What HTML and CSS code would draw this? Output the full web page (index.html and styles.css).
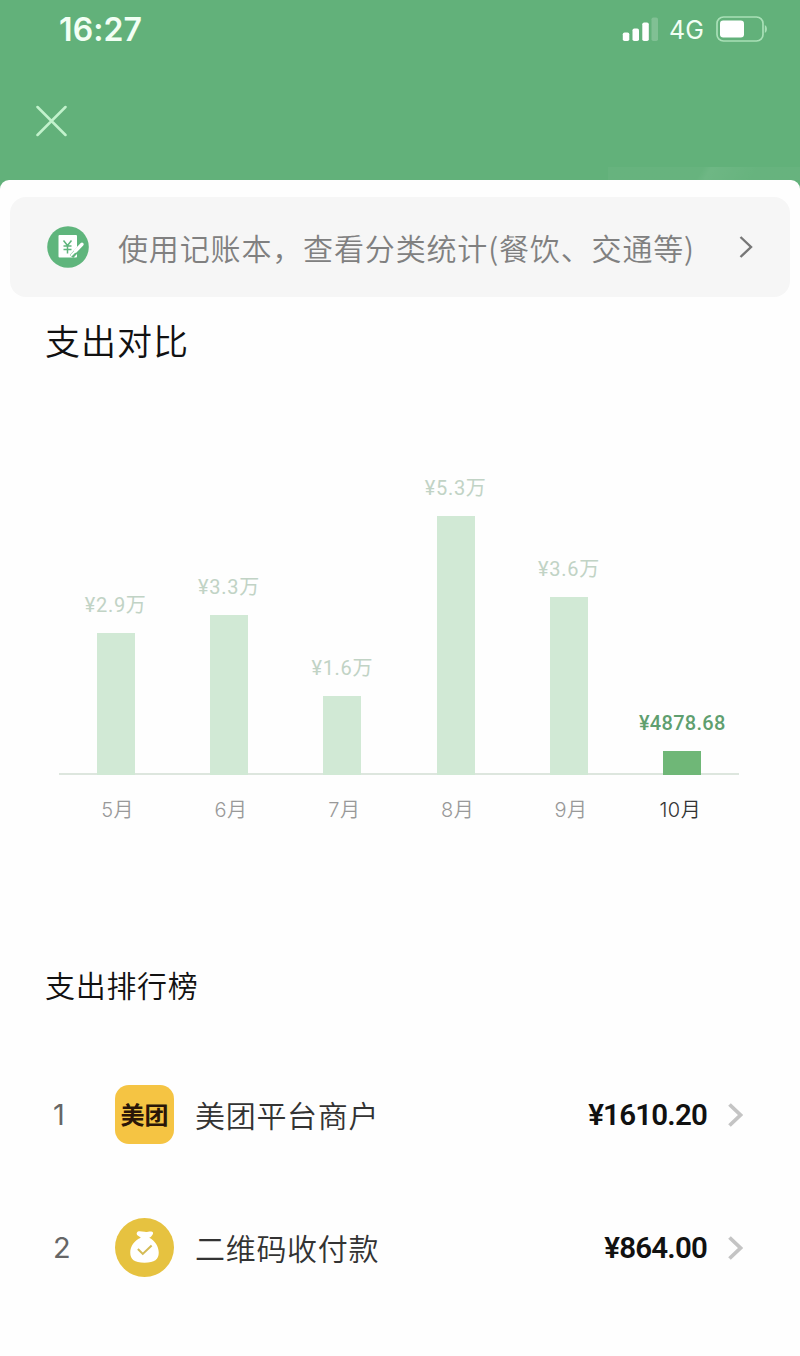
FILE: index.html
```html
<!DOCTYPE html>
<html lang="zh-CN">
<head>
  <meta charset="UTF-8">
  <title>支出对比</title>
  <link rel="stylesheet" href="styles.css">
</head>
<body>
  <header class="header">
    <div class="status-bar">
      <span class="time">16:27</span>
      <div class="status-icons">
        <svg class="signal" width="36" height="24" viewBox="0 0 36 24" fill="#fff">
          <rect x="0.8" y="15.5" width="6.5" height="8.5" rx="1.8"/>
          <rect x="10.5" y="11.5" width="6.5" height="12.5" rx="1.8"/>
          <rect x="20.3" y="5.5" width="6.5" height="18.5" rx="1.8"/>
          <rect x="29.5" y="0.5" width="6.5" height="23.5" rx="1.8" opacity=".2"/>
        </svg>
        <span class="network">4G</span>
        <svg class="battery" width="53" height="26" viewBox="0 0 53 26">
          <rect x="2" y="1" width="46" height="24" rx="6.5" fill="none" stroke="#a9e0b7" stroke-width="1.7"/>
          <rect x="5" y="4.5" width="24" height="17" rx="3.2" fill="#fff"/>
          <path d="M49.8 9c2.8 1.2 2.8 6.800 0 8z" fill="#a9e0b7"/>
        </svg>
      </div>
    </div>
    <svg class="close" width="32" height="32" viewBox="0 0 32 32" fill="none" stroke="#c2f2cc" stroke-width="2.5" stroke-linecap="round">
      <path d="M2.5 2l28 28M30.5 2L2.5 30"/>
    </svg>
    <div class="header-shade"></div>
  </header>

  <main class="sheet">
    <a class="banner">
      <svg class="book-icon" width="42" height="42" viewBox="0 0 42 42">
        <circle cx="21" cy="21" r="20.8" fill="#5fb57c"/>
        <rect x="11.5" y="9" width="18.5" height="22.5" rx="1" fill="#fff"/>
        <path d="M16.5 14.5l4 5 4-5M20.5 19.5v8M16.5 20h8M16.5 23.5h8" fill="none" stroke="#5fb57c" stroke-width="1.5"/>
        <path d="M24.5 30.5L35.5 18.5" stroke="#5fb57c" stroke-width="4.6"/>
        <path d="M28.5 25L35 18.3" stroke="#fff" stroke-width="3.4" stroke-linecap="round"/>
        <path d="M24.5 29L28.500 25" stroke="#fff" stroke-width="2" stroke-linecap="round"/>
      </svg>
      <span class="banner-text">使用记账本，查看分类统计(餐饮、交通等)</span>
      <svg class="banner-arrow" width="14" height="24" viewBox="0 0 14 24" fill="none" stroke="#777" stroke-width="2.4">
        <path d="M1.5 2L12 12 1.5 22"/>
      </svg>
    </a>

    <h1 class="compare-title">支出对比</h1>
    <section class="chart">
      <div class="bars">
        <div class="col"><span class="value">¥2.9万</span><div class="bar" style="height: 142px"></div></div>
        <div class="col"><span class="value">¥3.3万</span><div class="bar" style="height: 160px"></div></div>
        <div class="col"><span class="value">¥1.6万</span><div class="bar" style="height: 79px"></div></div>
        <div class="col"><span class="value">¥5.3万</span><div class="bar" style="height: 259px"></div></div>
        <div class="col"><span class="value">¥3.6万</span><div class="bar" style="height: 178px"></div></div>
        <div class="col current"><span class="value">¥4878.68</span><div class="bar" style="height: 24px"></div></div>
      </div>
      <div class="months">
        <span>5月</span>
        <span>6月</span>
        <span>7月</span>
        <span>8月</span>
        <span>9月</span>
        <span class="current">10月</span>
      </div>
    </section>

    <h2 class="rank-title">支出排行榜</h2>
    <ul class="rank-list">
      <li class="rank-item">
        <span class="rank-no">1</span>
        <span class="logo meituan">美团</span>
        <span class="merchant">美团平台商户</span>
        <span class="amount">¥1610.20</span>
        <svg class="arrow" width="15" height="24" viewBox="0 0 15 24" fill="none" stroke="#c4c4c4" stroke-width="3.8">
          <path d="M1.5 1.5L12.5 12 1.5 22.5"/>
        </svg>
      </li>
      <li class="rank-item">
        <span class="rank-no">2</span>
        <svg class="logo" width="58" height="58" viewBox="0 0 58 58">
          <circle cx="29" cy="29" r="29" fill="#e6c240"/>
          <path d="M21.5 14.5C22.5 12 26 13.2 29 13.6C32 14 34 12.6 36.5 13.4C39 14.4 36 18.5 33.5 19.5C39 22 43 28 43 34C43 41 39 44 29 44C19 44 15 41 15 34C15 28 19 22 25.5 19.5C23.5 17.5 20.5 17 21.5 14.5Z" fill="#fff"/>
          <path d="M22.5 30.5l4.8 4.800 8.700-8.300" fill="none" stroke="#d4bb55" stroke-width="2"/>
        </svg>
        <span class="merchant">二维码收付款</span>
        <span class="amount">¥864.00</span>
        <svg class="arrow" width="15" height="24" viewBox="0 0 15 24" fill="none" stroke="#c4c4c4" stroke-width="3.8">
          <path d="M1.5 1.5L12.5 12 1.5 22.5"/>
        </svg>
      </li>
    </ul>
  </main>
</body>
</html>
```
FILE: styles.css
```css
* {
  box-sizing: border-box;
}
body {
  margin: 0;
  height: 1356px;
  overflow: hidden;
  background: #62b17a;
  font-family: Inter, 'Noto Sans CJK SC', sans-serif;
}
.header {
  position: relative;
  height: 180px;
}
.status-bar {
  display: flex;
  justify-content: space-between;
  align-items: center;
  height: 58px;
  padding: 0 32px 0 59px;
  color: #f2fff4;
}
.time {
  font-size: 32px;
  font-weight: 600;
  letter-spacing: 0.1px;
}
.status-icons {
  display: flex;
  align-items: center;
}
.network {
  width: 36px;
  margin: 2px 10px 0 11px;
  font-size: 25px;
  line-height: 28px;
}
.close {
  display: block;
  margin: 47px 0 0 35px;
}
.header-shade {
  position: absolute;
  right: 0;
  bottom: 0;
  width: 192px;
  height: 13px;
  background: linear-gradient(120deg, rgba(255, 255, 255, 0.03) 48%, rgba(255, 255, 255, 0.08) 52%, rgba(255, 255, 255, 0.03) 75%);
}
.sheet {
  height: 1176px;
  padding-top: 17px;
  background: #fefefe;
  border-radius: 9px 9px 0 0;
}

/* bookkeeping entry */
.banner {
  display: flex;
  align-items: center;
  height: 100px;
  margin: 0 10px;
  padding: 0 37px;
  background: #f6f6f6;
  border-radius: 16px;
}
.banner-text {
  flex: 1;
  margin-left: 29px;
  color: #808080;
  font-family: 'Noto Sans CJK SC DemiLight', 'Noto Sans CJK SC', sans-serif;
  font-size: 30px;
  font-weight: 350;
  letter-spacing: 0.85px;
  white-space: nowrap;
}

/* chart */
.compare-title {
  margin: 19px 0 0 45px;
  color: #111;
  font-size: 35px;
  font-weight: 350;
  line-height: 52px;
  letter-spacing: 1px;
}
.chart {
  margin: 87px 61px 0 59px;
}
.bars {
  display: flex;
  height: 320px;
  border-bottom: 2px solid #dde6de;
}
.col {
  flex: 1;
  display: flex;
  flex-direction: column;
  align-items: center;
  justify-content: flex-end;
}
.value {
  margin-bottom: 14px;
  color: #c1d3c5;
  font-family: Roboto, 'Noto Sans CJK SC', sans-serif;
  font-size: 20px;
  line-height: 28px;
  letter-spacing: 0.7px;
  white-space: nowrap;
}
.bar {
  flex: none;
  width: 38px;
  margin-bottom: -2px;
  background: #d1e9d5;
}
.col.current .value {
  color: #5f9f6f;
  font-weight: 500;
  letter-spacing: 0.3px;
}
.col.current .bar {
  background: #6fb777;
}
.months {
  display: flex;
  padding-top: 20px;
}
.months span {
  flex: 1;
  padding-left: 4px;
  color: #999;
  font-size: 20px;
  font-weight: 350;
  line-height: 30px;
  letter-spacing: 0.5px;
  text-align: center;
}
.months .current {
  padding: 0 4px 0 0;
  color: #333;
}

/* ranking */
.rank-title {
  margin: 139px 0 0 45px;
  color: #111;
  font-size: 30px;
  font-weight: 350;
  line-height: 44px;
  letter-spacing: 0.7px;
}
.rank-list {
  margin: 40px 0 0;
  padding: 0 57px 0 53px;
  list-style: none;
}
.rank-item {
  display: flex;
  align-items: center;
  height: 133px;
}
.rank-no {
  width: 62px;
  color: #666;
  font-size: 29px;
}
.logo {
  flex: none;
  width: 59px;
  height: 59px;
}
.meituan {
  display: flex;
  align-items: center;
  justify-content: center;
  padding-bottom: 3px;
  background: #f5c443;
  border-radius: 14px;
  color: #2a1608;
  font-family: 'Noto Sans CJK SC', sans-serif;
  font-size: 24px;
  font-weight: 700;
}
.merchant {
  flex: 1;
  margin: -2px 0 0 21px;
  color: #333;
  font-size: 30px;
  font-weight: 350;
  letter-spacing: 0.7px;
}
.amount {
  color: #111;
  font-family: Roboto, sans-serif;
  font-size: 29.5px;
  font-weight: 600;
  letter-spacing: -0.8px;
}
.arrow {
  margin-left: 21px;
}
```
